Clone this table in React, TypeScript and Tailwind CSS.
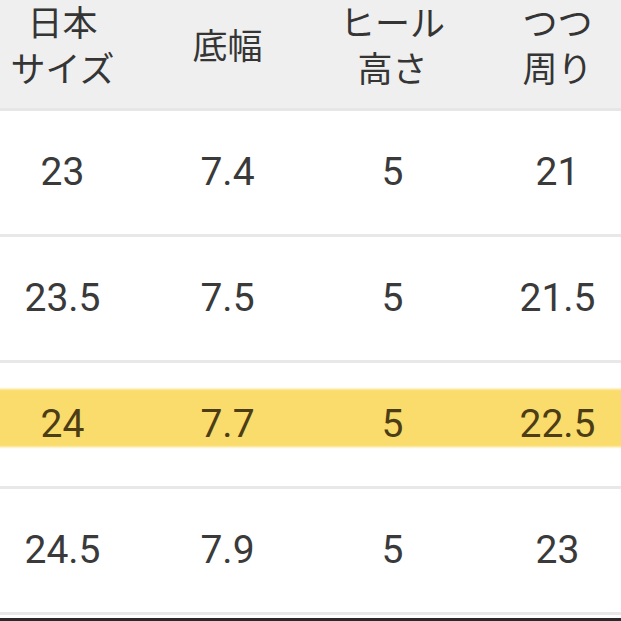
const FONT = "font-['Roboto','Noto_Sans_CJK_JP',sans-serif]";

const rows = [
  ["23", "7.4", "5", "21"],
  ["23.5", "7.5", "5", "21.5"],
  ["24", "7.7", "5", "22.5"],
  ["24.5", "7.9", "5", "23"],
];

const headers = [["日本", "サイズ"], ["底幅"], ["ヒール", "高さ"], ["つつ", "周り"]];

export default function App() {
  return (
    <div className={`h-[621px] w-[621px] overflow-hidden bg-white ${FONT}`}>
      <div className="-ml-[20px] w-[660px]">
        <div className="grid h-[111px] grid-cols-4 border-b-[3px] border-[#e6e6e6] bg-[#efefef] pb-[12px] text-[35px] leading-[46px] text-[#353535]">
          {headers.map((h, i) => (
            <div key={i} className="flex flex-col items-center justify-center">
              {h.map((t) => (
                <span key={t}>{t}</span>
              ))}
            </div>
          ))}
        </div>
        {rows.map((r, i) => {
          const hl = i === 2;
          return (
            <div
              key={i}
              className="relative grid h-[126px] grid-cols-4 border-b-[3px] border-[#e8e8e8] text-[39px]"
            >
              {hl && (
                <div className="absolute inset-x-0 top-[26px] h-[58px] rounded-[6px] bg-[#f9dc6c] blur-[1px]" />
              )}
              {r.map((v, j) => (
                <div
                  key={j}
                  className={`relative flex items-center justify-center ${hl ? "text-[#4d3d16]" : "text-[#3a3a3a]"}`}
                >
                  {v}
                </div>
              ))}
            </div>
          );
        })}
        <div className="h-[3px] bg-white" />
        <div className="h-[4px] bg-[#2a2a2a]" />
      </div>
    </div>
  );
}
